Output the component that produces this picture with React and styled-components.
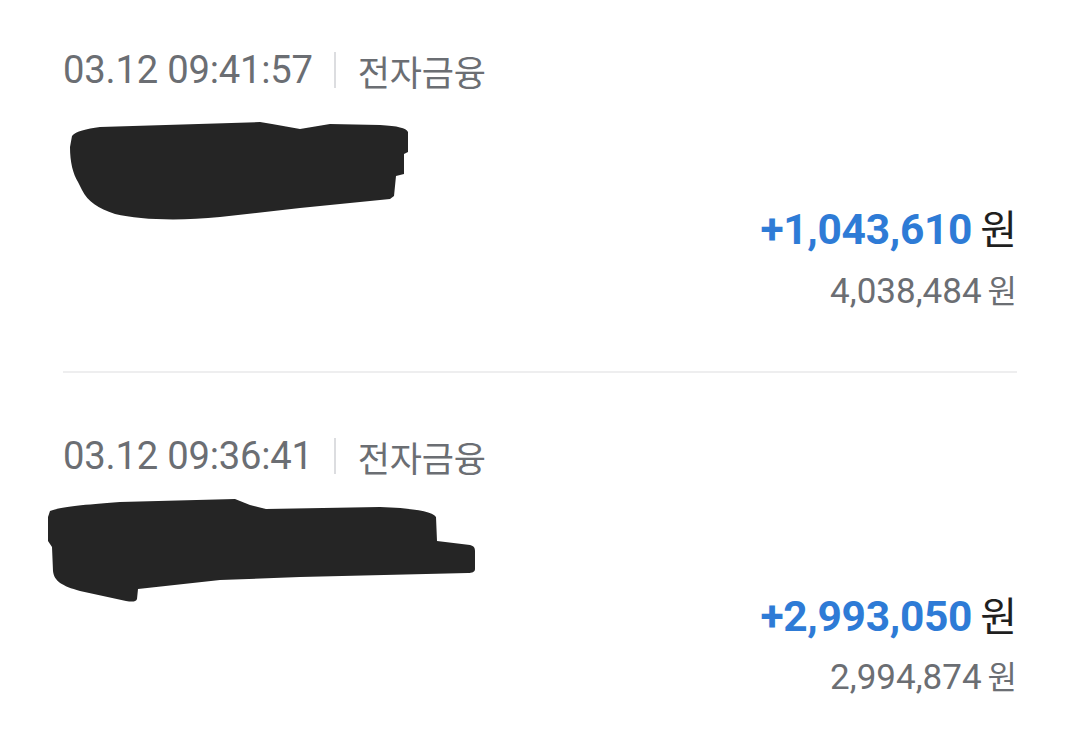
import React from 'react';
import styled, { createGlobalStyle } from 'styled-components';

const GlobalStyle = createGlobalStyle`
  html, body {
    margin: 0;
    padding: 0;
    background: #ffffff;
  }
  body {
    font-family: Roboto, "Noto Sans CJK KR", "Noto Sans", sans-serif;
    -webkit-font-smoothing: antialiased;
  }
`;

const List = styled.div`
  width: 1080px;
  padding: 0 63px;
  box-sizing: border-box;
`;

const Item = styled.div`
  padding: ${props => props.top}px 0 ${props => props.bottom}px;
  border-bottom: ${props => (props.last ? 'none' : '2px solid #eeeeef')};
`;

const Header = styled.div`
  display: flex;
  align-items: center;
  height: 52px;
  font-size: 38.2px;
  color: #6b6e73;
  letter-spacing: -0.2px;
`;

const Divider = styled.span`
  width: 2px;
  height: 36px;
  background: #dcdde0;
  margin: 0 22px 0 21px;
`;

const Category = styled.span`
  font-size: 35px;
  color: #6b6e73;
`;

const Body = styled.div`
  display: flex;
  justify-content: space-between;
  align-items: flex-start;
  margin-top: ${props => props.gap}px;
`;

const Redaction = styled.svg`
  display: block;
  margin-left: ${props => props.shift}px;
  flex-shrink: 0;
`;

const Amounts = styled.div`
  display: flex;
  flex-direction: column;
  align-items: flex-end;
  margin-top: ${props => props.offset}px;
`;

const AmountLine = styled.div`
  display: flex;
  align-items: baseline;
  height: 50px;
  line-height: 50px;
`;

const Change = styled.span`
  font-size: 42.5px;
  font-weight: 700;
  color: #2e7bd6;
  letter-spacing: -0.3px;
`;

const Unit = styled.span`
  font-size: ${props => props.size}px;
  color: ${props => props.color};
  margin-left: ${props => props.gap}px;
`;

const BalanceLine = styled.div`
  display: flex;
  align-items: baseline;
  height: 44px;
  line-height: 44px;
  margin-top: ${props => props.gap}px;
`;

const Balance = styled.span`
  font-size: 35px;
  color: #6b6e73;
`;

const BLOB_FILL = '#252525';

const blobs = [
  {
    box: '68 118 344 102',
    width: 344,
    height: 102,
    shift: 5,
    d: 'M72 134 C76 129 86 127 100 125 L260 120 L272 122 L300 127 L330 122 L380 123 C398 124 406 126 408 130 L408 150 L404 152 L404 172 L396 174 L394 194 L390 197 L300 206 L220 215 C180 219 140 218 115 212 C98 206 88 200 82 188 L78 180 C73 172 70 160 70 145 Z',
  },
  {
    box: '46 496 432 106',
    width: 432,
    height: 106,
    shift: -17,
    d: 'M50 510 C60 506 80 504 120 501 L235 498 L250 504 L266 508 L380 506 C410 507 432 510 436 516 L437 540 L470 544 C474 545 475 547 475 550 L475 568 C475 571 472 572 468 572 L300 576 L220 579 L138 588 L137 598 C136 601 132 601 126 600 L80 590 C62 585 54 580 53 570 L52 546 L48 540 L48 516 Z',
  },
];

const entries = [
  {
    time: '03.12 09:41:57',
    category: '전자금융',
    change: '+1,043,610',
    balance: '4,038,484',
    top: 44,
    bottom: 57,
    gap: 24,
    offset: 85,
    subGap: 15,
  },
  {
    time: '03.12 09:36:41',
    category: '전자금융',
    change: '+2,993,050',
    balance: '2,994,874',
    top: 57,
    bottom: 40,
    gap: 15,
    offset: 95,
    subGap: 14,
  },
];

const App = () => {
  return (
    <>
      <GlobalStyle />
      <List>
        {entries.map((entry, i) => {
          const blob = blobs[i];
          return (
            <Item key={entry.time} top={entry.top} bottom={entry.bottom} last={i === entries.length - 1}>
              <Header>
                {entry.time}
                <Divider />
                <Category>{entry.category}</Category>
              </Header>
              <Body gap={entry.gap}>
                <Redaction
                  shift={blob.shift}
                  width={blob.width}
                  height={blob.height}
                  viewBox={blob.box}
                >
                  <path d={blob.d} fill={BLOB_FILL} />
                </Redaction>
                <Amounts offset={entry.offset}>
                  <AmountLine>
                    <Change>{entry.change}</Change>
                    <Unit size={40} color="#1f1f1f" gap={8}>원</Unit>
                  </AmountLine>
                  <BalanceLine gap={entry.subGap}>
                    <Balance>{entry.balance}</Balance>
                    <Unit size={32} color="#6b6e73" gap={6}>원</Unit>
                  </BalanceLine>
                </Amounts>
              </Body>
            </Item>
          );
        })}
      </List>
    </>
  );
};

export default App;
